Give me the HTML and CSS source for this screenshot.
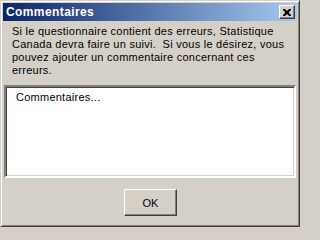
FILE: index.html
```html
<!DOCTYPE html>
<html lang="fr">
<head>
<meta charset="utf-8">
<title>Commentaires</title>
<link rel="stylesheet" href="styles.css">
</head>
<body>
<div class="window">
  <div class="titlebar">
    <span class="title">Commentaires</span>
    <span class="close">
      <svg width="8" height="7" viewBox="0 0 8 7"><path d="M0 0h2l2 2 2-2h2v1l-2 2v1l2 2v1h-2l-2-2-2 2h-2v-1l2-2v-1l-2-2z" fill="#000"/></svg>
    </span>
  </div>
  <p class="message">Si le questionnaire contient des erreurs, Statistique<br>Canada devra faire un suivi.&nbsp; Si vous le désirez, vous<br>pouvez ajouter un commentaire concernant ces<br>erreurs.</p>
  <div class="field">Commentaires...</div>
  <div class="footer">
    <button class="btn">OK</button>
  </div>
</div>
</body>
</html>
```
FILE: styles.css
```css
html, body {
  margin: 0;
  padding: 0;
  background: #d4d0c8;
}
.window {
  box-sizing: border-box;
  width: 300px;
  height: 227px;
  display: flex;
  flex-direction: column;
  background: #d4d0c8;
  border: 1px solid;
  border-color: #d4d0c8 #404040 #404040 #d4d0c8;
  box-shadow: inset 1px 1px #ffffff, inset -1px -1px #808080;
  padding: 2px;
  font-family: "Liberation Sans", Arial, sans-serif;
  font-size: 11px;
  color: #000;
}
.titlebar {
  height: 18px;
  display: flex;
  align-items: center;
  justify-content: space-between;
  background: linear-gradient(to right, #0a246a, #a6caf0);
  padding-left: 3px;
  padding-right: 2px;
}
.title {
  color: #fff;
  font-weight: bold;
  font-size: 12px;
  letter-spacing: 0.4px;
}
.close {
  box-sizing: border-box;
  width: 16px;
  height: 14px;
  display: flex;
  align-items: center;
  justify-content: center;
  background: #d4d0c8;
  border: 1px solid;
  border-color: #ffffff #404040 #404040 #ffffff;
  box-shadow: inset -1px -1px #808080;
}
.message {
  margin: 0;
  padding: 4px 0 0 9px;
  line-height: 13px;
  height: 54px;
  letter-spacing: 0.25px;
}
.field {
  box-sizing: border-box;
  margin: 6px 1px 0 1px;
  height: 93px;
  background: #fff;
  border: 2px solid;
  border-color: #808080 #ffffff #ffffff #808080;
  box-shadow: inset 1px 1px #404040, inset -1px -1px #d4d0c8;
  padding: 4px 10px;
  line-height: 13px;
  letter-spacing: 0.25px;
}
.footer {
  display: flex;
  justify-content: center;
  padding-top: 11px;
}
.btn {
  box-sizing: border-box;
  width: 53px;
  height: 27px;
  margin-left: 1px;
  background: #d4d0c8;
  border: 1px solid;
  border-color: #ffffff #404040 #404040 #ffffff;
  box-shadow: inset -1px -1px #808080;
  font-family: "Liberation Sans", Arial, sans-serif;
  font-size: 11px;
  color: #000;
  padding: 0;
}
```
